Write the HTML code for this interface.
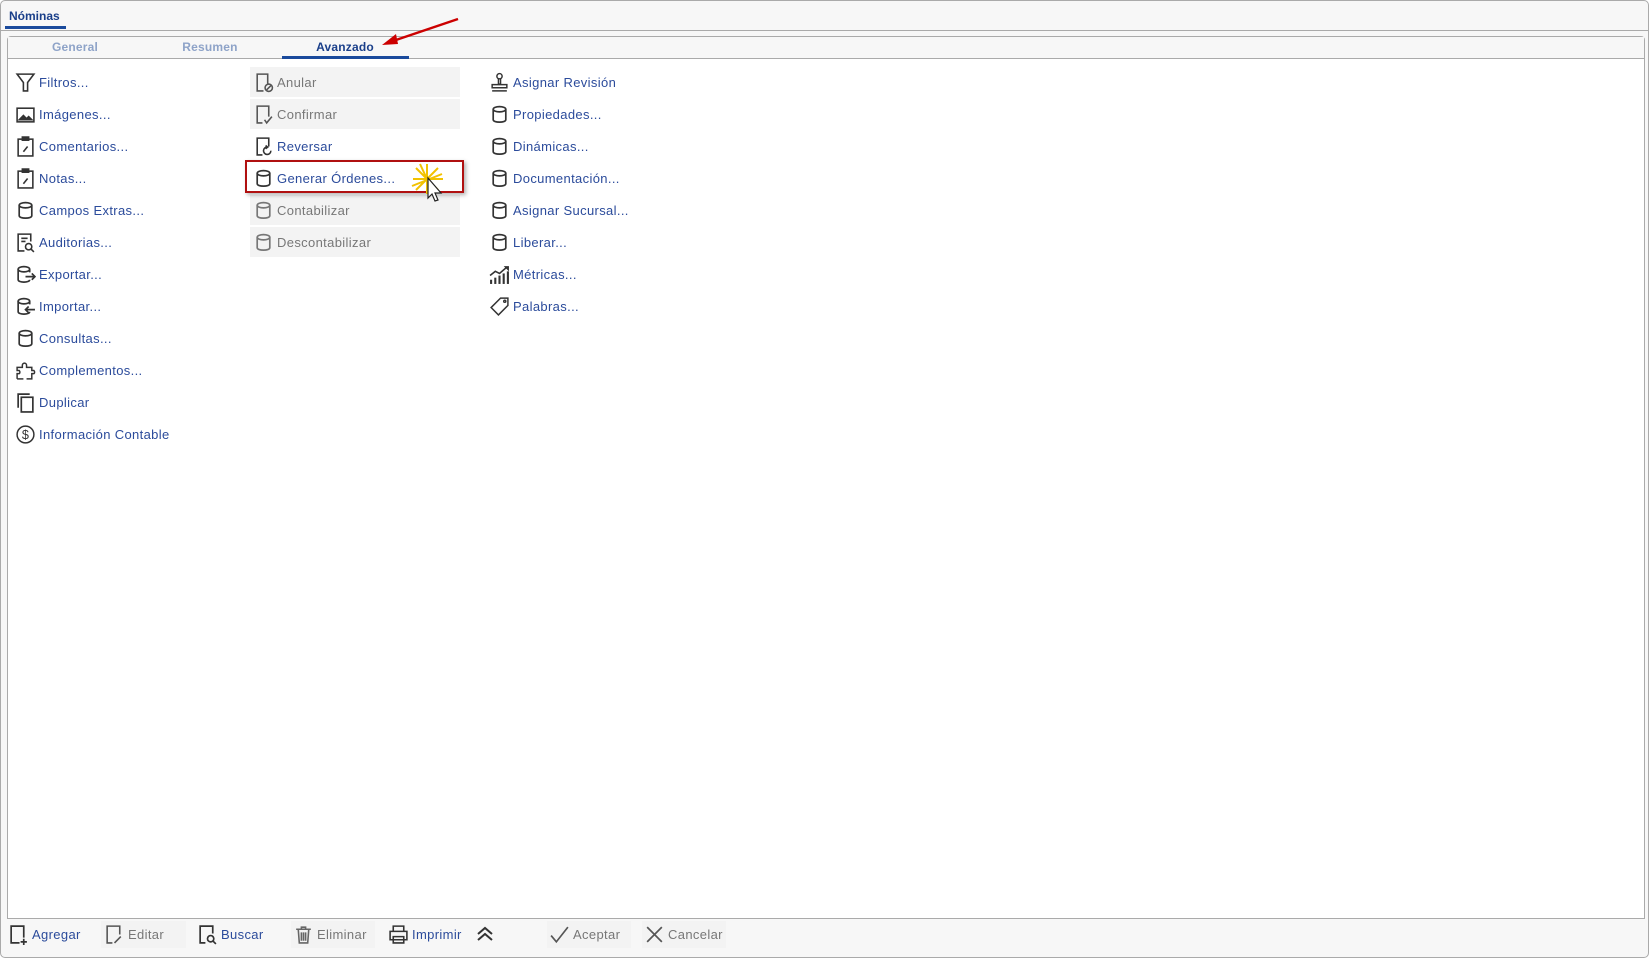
<!DOCTYPE html>
<html><head><meta charset="utf-8"><style>
*{margin:0;padding:0;box-sizing:border-box}
body{width:1650px;height:959px;background:#fff;position:relative;overflow:hidden;font-family:"Liberation Sans",sans-serif;font-size:13px;color:#2b4b9b}
.a{position:absolute}
.it{position:absolute;height:30px;display:flex;align-items:center;white-space:nowrap;letter-spacing:0.35px}
.it svg{width:21px;height:21px;margin-right:3px;flex:none}
.dis{color:#777;background:#f3f3f3}
.tab{position:absolute;top:40px;font-weight:bold;font-size:12px;color:#8ea3c8;transform:translateX(-50%);letter-spacing:0.2px}
</style></head><body>
<div class="a" style="left:0;top:0;width:1649px;height:958px;border:1px solid #aaa;border-radius:5px;background:#f7f7f7"></div>
<div class="a" style="left:0;top:30px;width:1649px;height:1px;background:#aaa"></div>
<div class="a" style="left:9px;top:9px;font-weight:bold;font-size:12px;color:#1a3f8a">Nóminas</div>
<div class="a" style="left:5px;top:26px;width:61px;height:3px;background:#1a4a9c"></div>
<div class="a" style="left:7px;top:36px;width:1638px;height:883px;border:1px solid #aaa;border-radius:4px 4px 0 0;background:#fff"></div>
<div class="a" style="left:8px;top:37px;width:1636px;height:22px;background:#f7f7f7;border-bottom:1px solid #aaa"></div>
<div class="tab" style="left:75px">General</div>
<div class="tab" style="left:210px">Resumen</div>
<div class="tab" style="left:345px;color:#1a3f8a">Avanzado</div>
<div class="a" style="left:282px;top:56px;width:127px;height:3px;background:#1a4a9c"></div>
<svg class="a" style="left:370px;top:12px" width="100" height="40"><line x1="88" y1="7" x2="20" y2="30" stroke="#c00" stroke-width="2.5"/><polygon points="12,33 26,22 28,32" fill="#c00"/></svg>

<!-- column 1 -->
<div class="it" style="left:15px;top:67px"><svg viewBox="0 0 20 20" fill="none" stroke="#333" stroke-width="1.5"><path d="M2 2h16l-6 8v8h-4v-8z"/></svg>Filtros...</div>
<div class="it" style="left:15px;top:99px"><svg viewBox="0 0 20 20" fill="none" stroke="#333" stroke-width="1.5"><rect x="2" y="4" width="16" height="13"/><path d="M4 15l4-4 3 3 2-2 3 3z" fill="#333"/></svg>Imágenes...</div>
<div class="it" style="left:15px;top:131px"><svg viewBox="0 0 20 20" fill="none" stroke="#333" stroke-width="1.5"><rect x="3" y="3" width="14" height="16"/><rect x="7" y="1" width="6" height="3" fill="#333"/><path d="M8 15l4-5"/></svg>Comentarios...</div>
<div class="it" style="left:15px;top:163px"><svg viewBox="0 0 20 20" fill="none" stroke="#333" stroke-width="1.5"><rect x="3" y="3" width="14" height="16"/><rect x="7" y="1" width="6" height="3" fill="#333"/><path d="M8 15l4-5"/></svg>Notas...</div>
<div class="it" style="left:15px;top:195px"><svg viewBox="0 0 20 20" fill="none" stroke="#333" stroke-width="1.6"><path d="M4 5v10c0 3 12 3 12 0V5"/><ellipse cx="10" cy="5" rx="6" ry="2.5"/></svg>Campos Extras...</div>
<div class="it" style="left:15px;top:227px"><svg viewBox="0 0 20 20" fill="none" stroke="#333" stroke-width="1.5"><path d="M9 18H3V2h12v7"/><path d="M6 6h6M6 9h4"/><circle cx="13" cy="14" r="3"/><path d="M15 16l3 3"/></svg>Auditorias...</div>
<div class="it" style="left:15px;top:259px"><svg viewBox="0 0 20 20" fill="none" stroke="#333" stroke-width="1.6"><path d="M3 5v10c0 3 11 3 11 0M14 5v3"/><ellipse cx="8.5" cy="5" rx="5.5" ry="2.5"/><path d="M10 12h9M16 9l3 3-3 3"/></svg>Exportar...</div>
<div class="it" style="left:15px;top:291px"><svg viewBox="0 0 20 20" fill="none" stroke="#333" stroke-width="1.6"><path d="M3 5v10c0 3 11 3 11 0M14 5v3"/><ellipse cx="8.5" cy="5" rx="5.5" ry="2.5"/><path d="M19 13h-9M13 10l-3 3 3 3"/></svg>Importar...</div>
<div class="it" style="left:15px;top:323px"><svg viewBox="0 0 20 20" fill="none" stroke="#333" stroke-width="1.6"><path d="M4 5v10c0 3 12 3 12 0V5"/><ellipse cx="10" cy="5" rx="6" ry="2.5"/></svg>Consultas...</div>
<div class="it" style="left:15px;top:355px"><svg viewBox="0 0 20 20" fill="none" stroke="#333" stroke-width="1.4"><path d="M2 18v-5h2a2 2 0 000-3H2V7h5V5a2 2 0 014 0v2h5v3h2a2 2 0 010 3h-2v5h-5"/><path d="M2 18h6"/></svg>Complementos...</div>
<div class="it" style="left:15px;top:387px"><svg viewBox="0 0 20 20" fill="none" stroke="#333" stroke-width="1.6"><path d="M3 15V2h11"/><rect x="6" y="5" width="11" height="14"/></svg>Duplicar</div>
<div class="it" style="left:15px;top:419px"><svg viewBox="0 0 20 20" fill="none" stroke="#333" stroke-width="1.4"><circle cx="10" cy="10" r="8"/><text x="10" y="14.5" font-size="12" text-anchor="middle" fill="#333" stroke="none" font-family="Liberation Sans">$</text></svg>Información Contable</div>

<!-- column 2 -->
<div class="it dis" style="left:250px;top:67px;width:210px;padding-left:3px"><svg viewBox="0 0 20 20" fill="none" stroke="#555" stroke-width="1.5"><path d="M10 18H4V2h10v9"/><circle cx="15" cy="15" r="3.5"/><path d="M13 17l4-4"/></svg>Anular</div>
<div class="it dis" style="left:250px;top:99px;width:210px;padding-left:3px"><svg viewBox="0 0 20 20" fill="none" stroke="#555" stroke-width="1.5"><path d="M9 18H4V2h11v10"/><path d="M11 15l2 3 5-6"/></svg>Confirmar</div>
<div class="it" style="left:250px;top:131px;padding-left:3px"><svg viewBox="0 0 20 20" fill="none" stroke="#333" stroke-width="1.5"><path d="M9 18H4V2h11v8"/><path d="M17 14a3.5 3.5 0 11-3-3.4M12 9l2 1.6-2 1.6"/></svg>Reversar</div>
<div class="it" style="left:250px;top:163px;padding-left:3px"><svg viewBox="0 0 20 20" fill="none" stroke="#333" stroke-width="1.6"><path d="M4 5v10c0 3 12 3 12 0V5"/><ellipse cx="10" cy="5" rx="6" ry="2.5"/></svg>Generar Órdenes...</div>
<div class="it dis" style="left:250px;top:195px;width:210px;padding-left:3px"><svg viewBox="0 0 20 20" fill="none" stroke="#777" stroke-width="1.6"><path d="M4 5v10c0 3 12 3 12 0V5"/><ellipse cx="10" cy="5" rx="6" ry="2.5"/></svg>Contabilizar</div>
<div class="it dis" style="left:250px;top:227px;width:210px;padding-left:3px"><svg viewBox="0 0 20 20" fill="none" stroke="#777" stroke-width="1.6"><path d="M4 5v10c0 3 12 3 12 0V5"/><ellipse cx="10" cy="5" rx="6" ry="2.5"/></svg>Descontabilizar</div>
<div class="a" style="left:245px;top:160px;width:219px;height:33px;border:2px solid #b01010;box-shadow:2px 2px 4px rgba(0,0,0,.3)"></div>
<svg class="a" style="left:410px;top:162px" width="40" height="45" viewBox="0 0 40 45"><g stroke="#f2c200" stroke-width="2"><path d="M17 2v30M3 17h30M6 6l22 22M28 6L6 28M10 2l14 30M2 24l30-12"/></g><path d="M18 16v20l4-4 3 7 3-1-3-7h6z" fill="#fff" stroke="#222" stroke-width="1.2"/></svg>

<!-- column 3 -->
<div class="it" style="left:489px;top:67px"><svg viewBox="0 0 20 20" fill="none" stroke="#333" stroke-width="1.4"><circle cx="10" cy="4" r="2.5"/><path d="M9 6.5v5h2v-5M3 12h14v3H3zM3 18h14"/></svg>Asignar Revisión</div>
<div class="it" style="left:489px;top:99px"><svg viewBox="0 0 20 20" fill="none" stroke="#333" stroke-width="1.6"><path d="M4 5v10c0 3 12 3 12 0V5"/><ellipse cx="10" cy="5" rx="6" ry="2.5"/></svg>Propiedades...</div>
<div class="it" style="left:489px;top:131px"><svg viewBox="0 0 20 20" fill="none" stroke="#333" stroke-width="1.6"><path d="M4 5v10c0 3 12 3 12 0V5"/><ellipse cx="10" cy="5" rx="6" ry="2.5"/></svg>Dinámicas...</div>
<div class="it" style="left:489px;top:163px"><svg viewBox="0 0 20 20" fill="none" stroke="#333" stroke-width="1.6"><path d="M4 5v10c0 3 12 3 12 0V5"/><ellipse cx="10" cy="5" rx="6" ry="2.5"/></svg>Documentación...</div>
<div class="it" style="left:489px;top:195px"><svg viewBox="0 0 20 20" fill="none" stroke="#333" stroke-width="1.6"><path d="M4 5v10c0 3 12 3 12 0V5"/><ellipse cx="10" cy="5" rx="6" ry="2.5"/></svg>Asignar Sucursal...</div>
<div class="it" style="left:489px;top:227px"><svg viewBox="0 0 20 20" fill="none" stroke="#333" stroke-width="1.6"><path d="M4 5v10c0 3 12 3 12 0V5"/><ellipse cx="10" cy="5" rx="6" ry="2.5"/></svg>Liberar...</div>
<div class="it" style="left:489px;top:259px"><svg viewBox="0 0 20 20" fill="#333"><rect x="1" y="15" width="2" height="4"/><rect x="5" y="13" width="2" height="6"/><rect x="9" y="11" width="2" height="8"/><rect x="13" y="9" width="2" height="10"/><rect x="17" y="7" width="2" height="12"/><path d="M1 11l5-4 4 2 7-6" fill="none" stroke="#333" stroke-width="1.5"/><path d="M14 2h5v5z"/></svg>Métricas...</div>
<div class="it" style="left:489px;top:291px"><svg viewBox="0 0 20 20" fill="none" stroke="#333" stroke-width="1.4"><path d="M11 2h7v7l-9 9-7-7z"/><circle cx="15" cy="5" r="1"/></svg>Palabras...</div>

<!-- toolbar -->
<div class="a dis" style="left:101px;top:921px;width:85px;height:27px"></div>
<div class="a dis" style="left:291px;top:921px;width:84px;height:27px"></div>
<div class="a dis" style="left:547px;top:921px;width:84px;height:27px"></div>
<div class="a dis" style="left:642px;top:921px;width:84px;height:27px"></div>
<div class="it" style="left:8px;top:919px"><svg viewBox="0 0 20 20" fill="none" stroke="#333" stroke-width="1.6"><path d="M11 18H3V2h12v11M15 14v6M12 17h6"/></svg>Agregar</div>
<div class="it" style="left:104px;top:919px;color:#777"><svg viewBox="0 0 20 20" fill="none" stroke="#555" stroke-width="1.5"><path d="M8 18H3V2h12v8M10 18l6-6"/></svg>Editar</div>
<div class="it" style="left:197px;top:919px"><svg viewBox="0 0 20 20" fill="none" stroke="#333" stroke-width="1.6"><path d="M8 18H3V2h12v7"/><circle cx="13" cy="14" r="3"/><path d="M15 16l3 3"/></svg>Buscar</div>
<div class="it" style="left:293px;top:919px;color:#777"><svg viewBox="0 0 20 20" fill="none" stroke="#666" stroke-width="1.5"><path d="M3 5h14M8 5V3h4v2M5 5l1 13h8l1-13M8 8v8M10 8v8M12 8v8"/></svg>Eliminar</div>
<div class="it" style="left:388px;top:919px"><svg viewBox="0 0 20 20" fill="none" stroke="#333" stroke-width="1.5"><path d="M5 7V2h10v5M2 7h16v8H2zM5 12h10v6H5z"/></svg>Imprimir</div>
<svg class="a" style="left:475px;top:924px" width="20" height="20" viewBox="0 0 20 20" fill="none" stroke="#333" stroke-width="2"><path d="M3 10l7-6 7 6M3 16l7-6 7 6"/></svg>
<div class="it" style="left:549px;top:919px;color:#777"><svg viewBox="0 0 20 20" fill="none" stroke="#555" stroke-width="1.6"><path d="M2 11l5 6L18 3"/></svg>Aceptar</div>
<div class="it" style="left:644px;top:919px;color:#777"><svg viewBox="0 0 20 20" fill="none" stroke="#555" stroke-width="1.6"><path d="M3 3l14 14M17 3L3 17"/></svg>Cancelar</div>
</body></html>
